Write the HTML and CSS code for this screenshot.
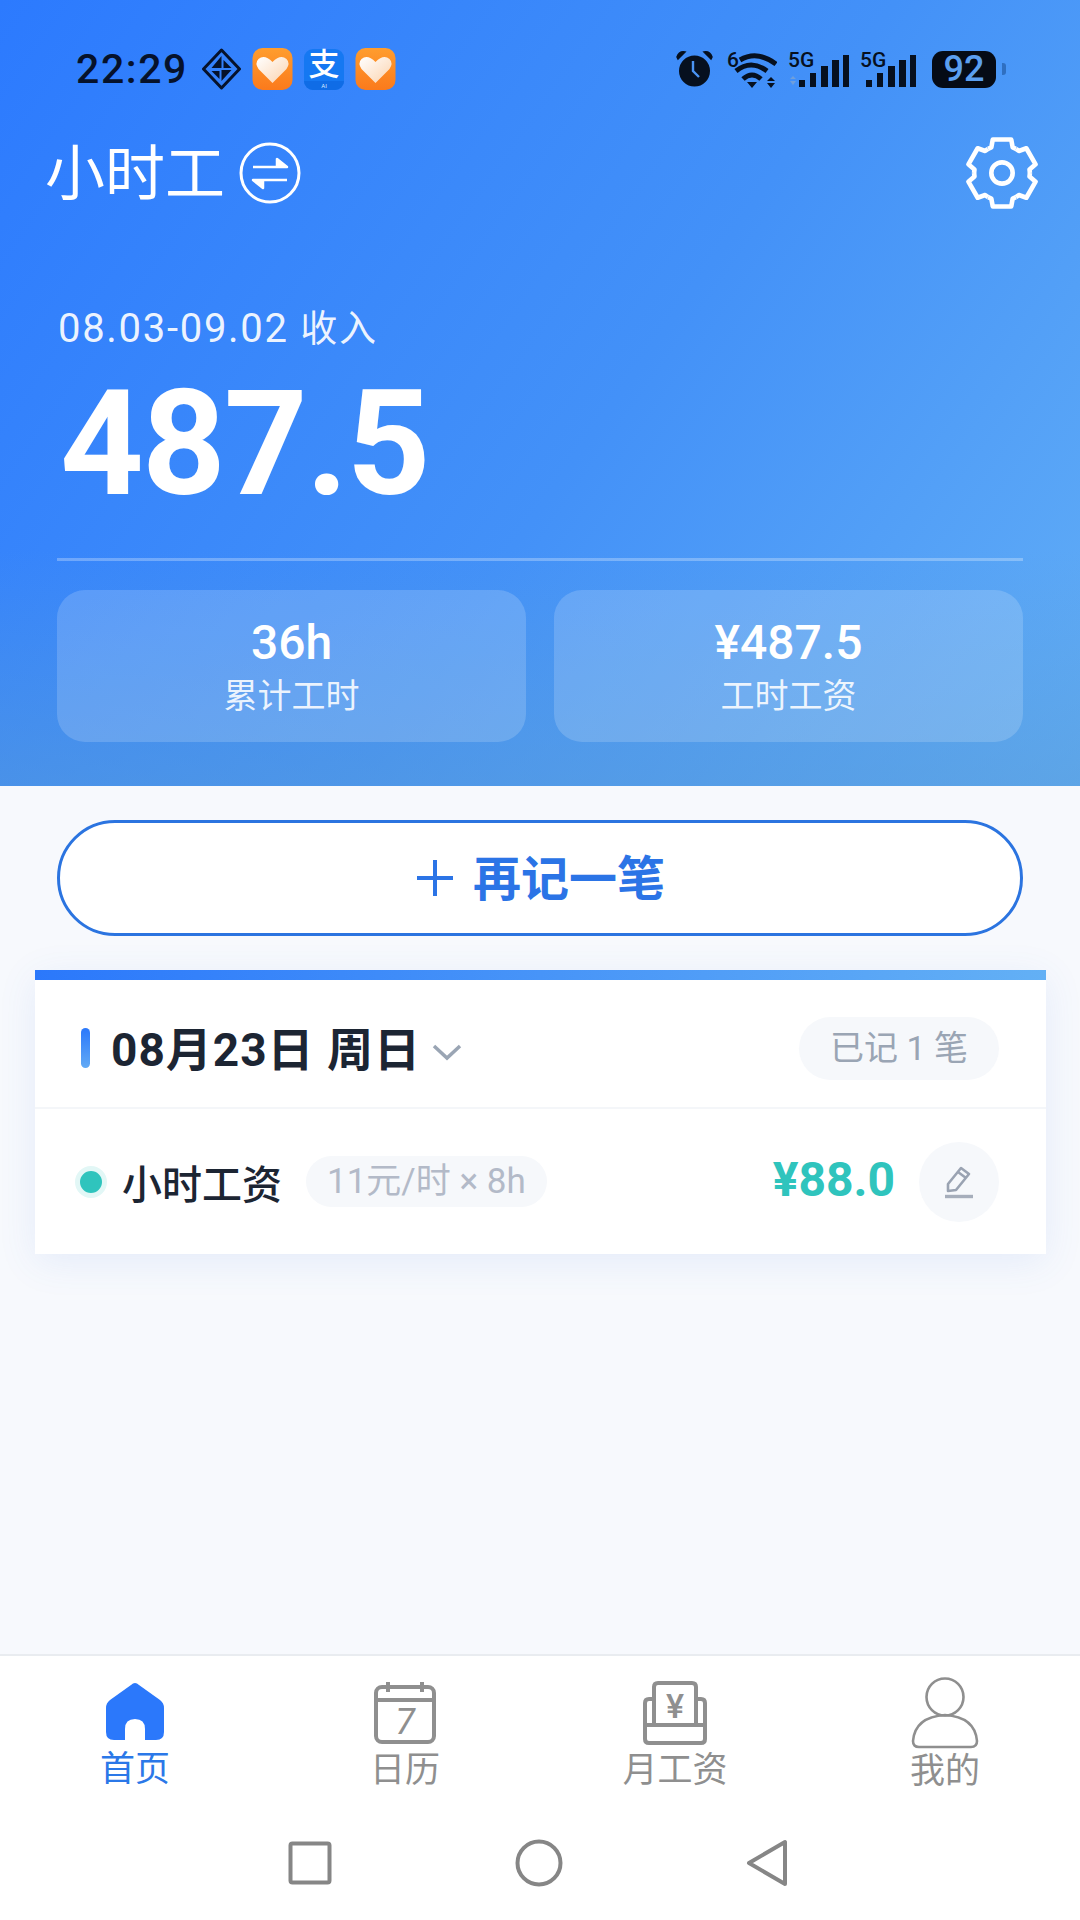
FILE: index.html
```html
<!DOCTYPE html>
<html lang="zh-CN">
<head>
    <meta charset="UTF-8">
    <meta name="viewport" content="width=device-width, initial-scale=1.0">
    <title>小时工</title>
    <link rel="stylesheet" href="styles.css">
</head>
<body>
    <div class="page">
        <header class="hero">
            <div class="status">
                <div class="status-left">
                    <span class="time">22:29</span>
                    <svg class="diamond" width="41" height="42" viewBox="0 0 40 42">
                        <path d="M20 2 L38 21 L20 40 L2 21 Z" fill="none" stroke="#06122b" stroke-width="3" stroke-linejoin="round"/>
                        <path d="M20 8 L20 20 L10 20 Z M20 22 L30 22 L20 33 Z M22 12 L30 20 L22 20 Z M10 23 L18 23 L18 31 Z" fill="#06122b"/>
                    </svg>
                    <svg class="app-icon" width="41" height="42" viewBox="0 0 40 42">
                        <use href="#heart-app"/>
                    </svg>
                    <div class="alipay"><span class="alipay-char">支</span><span class="alipay-ai">AI</span></div>
                    <svg class="app-icon" width="41" height="42" viewBox="0 0 40 42">
                        <use href="#heart-app"/>
                    </svg>
                </div>
                <div class="status-right">
                    <svg class="alarm" width="37" height="42" viewBox="0 0 37 42">
                        <circle cx="18.5" cy="23" r="15.5" fill="#06101f"/>
                        <path d="M1 9 Q3 3 9 4 L2 11 Z M36 9 Q34 3 28 4 L35 11 Z" fill="#06101f" stroke="#06101f" stroke-width="1.5"/>
                        <path d="M17 13 V23 L23 29" fill="none" stroke="#4a94f4" stroke-width="2.4"/>
                    </svg>
                    <svg class="wifi" width="50" height="42" viewBox="0 0 50 42">
                        <text class="sb-small" x="0" y="19">6</text>
                        <path d="M13 12 Q30 2 49 16" fill="none" stroke="#06101f" stroke-width="5"/>
                        <path d="M9 23 Q24 11 40 23" fill="none" stroke="#06101f" stroke-width="5"/>
                        <path d="M16 31 Q25 23 34 31" fill="none" stroke="#06101f" stroke-width="5"/>
                        <path d="M20 34 H30 L25 40 Z M44 29 L48 33 H40 Z M40 35 H48 L44 40 Z" fill="#06101f"/>
                    </svg>
                    <svg class="signal" width="61" height="42" viewBox="0 0 61 42">
                        <text class="sb-small" x="0" y="19">5G</text>
                        <path d="M2 31 L5 28 L8 31 Z M2 33 H8 L5 37 Z" fill="#6f9fdc"/>
                        <rect x="11" y="32" width="6" height="7" fill="#06101f"/>
                        <rect x="22" y="25" width="6" height="14" fill="#06101f"/>
                        <rect x="33" y="18" width="7" height="21" fill="#06101f"/>
                        <rect x="44" y="12" width="7" height="27" fill="#06101f"/>
                        <rect x="55" y="7" width="6" height="32" fill="#06101f"/>
                    </svg>
                    <svg class="signal signal-last" width="57" height="42" viewBox="0 0 57 42">
                        <text class="sb-small" x="0" y="19">5G</text>
                        <rect x="6" y="32" width="6" height="7" fill="#06101f"/>
                        <rect x="17" y="25" width="6" height="14" fill="#06101f"/>
                        <rect x="28" y="18" width="7" height="21" fill="#06101f"/>
                        <rect x="39" y="12" width="7" height="27" fill="#06101f"/>
                        <rect x="50" y="7" width="6" height="32" fill="#06101f"/>
                    </svg>
                    <div class="battery"><span class="battery-num">92</span></div>
                    <div class="battery-nub"></div>
                </div>
            </div>

            <div class="title-row">
                <div class="title-left">
                    <h1 class="title">小时工</h1>
                    <svg class="swap" width="62" height="62" viewBox="0 0 62 62">
                        <circle cx="31" cy="31" r="29" fill="none" stroke="#fff" stroke-width="3"/>
                        <path d="M14 25 H48 L38 17 V25" fill="#fff" stroke="#fff" stroke-width="2.5" stroke-linejoin="round"/>
                        <path d="M48 38 H14 L24 46 V38" fill="#fff" stroke="#fff" stroke-width="2.5" stroke-linejoin="round"/>
                    </svg>
                </div>
                <svg class="gear" width="74" height="74" viewBox="-52 -52 104 104">
                    <g fill="none" stroke="#fff" stroke-width="6.5" stroke-linejoin="round">
                        <path id="tooth" d="M-19.6 -34 L-15 -36 L-13 -47 H13 L15 -36 L19.6 -34"/>
                        <use href="#tooth" transform="rotate(60)"/>
                        <use href="#tooth" transform="rotate(120)"/>
                        <use href="#tooth" transform="rotate(180)"/>
                        <use href="#tooth" transform="rotate(240)"/>
                        <use href="#tooth" transform="rotate(300)"/>
                        <circle r="15"/>
                    </g>
                </svg>
            </div>

            <div class="income-label">08.03-09.02 <span class="income-unit">收入</span></div>
            <div class="income">487.5</div>
            <div class="hero-line"></div>

            <div class="stats">
                <div class="stat">
                    <div class="stat-value">36h</div>
                    <div class="stat-label">累计工时</div>
                </div>
                <div class="stat">
                    <div class="stat-value">¥487.5</div>
                    <div class="stat-label">工时工资</div>
                </div>
            </div>
        </header>

        <main class="content">
            <button class="add-btn"><span class="add-plus">
                <svg width="40" height="40" viewBox="0 0 40 40"><path d="M20 2 V38 M2 20 H38" stroke="#2b74e6" stroke-width="4" fill="none"/></svg>
            </span><span class="add-text">再记一笔</span></button>

            <section class="day-card">
                <div class="day-head">
                    <div class="day-left">
                        <span class="day-mark"></span>
                        <span class="day-date">08月23日 周日</span>
                        <svg class="chevron" width="30" height="18" viewBox="0 0 30 18"><path d="M2 3 L15 15 L28 3" fill="none" stroke="#9aa5b4" stroke-width="3.5"/></svg>
                    </div>
                    <div class="day-count">已记 1 笔</div>
                </div>
                <div class="record">
                    <div class="record-left">
                        <span class="record-dot"></span>
                        <span class="record-name">小时工资</span>
                        <span class="record-rate">11元/时 × 8h</span>
                    </div>
                    <div class="record-right">
                        <span class="record-money">¥88.0</span>
                        <span class="edit-btn">
                            <svg width="30" height="34" viewBox="0 0 30 34">
                                <path d="M4 19 L17 3 L25 9 L12 25 L4 26 Z M14 7 L22 13" fill="none" stroke="#9aa3b2" stroke-width="2.6" stroke-linejoin="round"/>
                                <path d="M1 31.5 H29" stroke="#a6aebb" stroke-width="3.4"/>
                            </svg>
                        </span>
                    </div>
                </div>
            </section>
        </main>

        <nav class="tabs">
            <a class="tab tab-on">
                <svg width="58" height="60" viewBox="0 0 58 60">
                    <path d="M29 1 Q31 1 33 3 L54 18 Q58 21 58 26 V50 Q58 58 50 58 H39 V47 Q39 37 29 37 Q19 37 19 47 V58 H8 Q0 58 0 50 V26 Q0 21 4 18 L25 3 Q27 1 29 1 Z" fill="#2b78fb"/>
                </svg>
                <span class="tab-name">首页</span>
            </a>
            <a class="tab">
                <svg width="64" height="64" viewBox="0 0 64 64">
                    <rect x="3" y="6" width="58" height="55" rx="6" fill="none" stroke="#8f8f8f" stroke-width="4"/>
                    <path d="M3 19 H61 M15 1 V11 M49 1 V11" stroke="#8f8f8f" stroke-width="4"/>
                    <text class="cal-num" x="32" y="53">7</text>
                </svg>
                <span class="tab-name">日历</span>
            </a>
            <a class="tab">
                <svg width="64" height="64" viewBox="0 0 64 64">
                    <path d="M11 44 V6 Q11 2 15 2 H49 Q53 2 53 6 V44" fill="none" stroke="#8f8f8f" stroke-width="4"/>
                    <path d="M11 18 H6 Q2 18 2 22 V58 Q2 62 6 62 H58 Q62 62 62 58 V22 Q62 18 58 18 H53 M2 44 H62" fill="none" stroke="#8f8f8f" stroke-width="4"/>
                    <text class="yuan" x="32" y="37">¥</text>
                </svg>
                <span class="tab-name">月工资</span>
            </a>
            <a class="tab tab-me">
                <svg width="68" height="72" viewBox="0 0 68 72">
                    <circle cx="34" cy="20" r="18.5" fill="none" stroke="#8f8f8f" stroke-width="2.6"/>
                    <path d="M8 70 Q2 70 2 64 Q4 40 34 38 Q64 40 66 64 Q66 70 60 70 Z" fill="none" stroke="#8f8f8f" stroke-width="2.6"/>
                </svg>
                <span class="tab-name">我的</span>
            </a>
        </nav>

        <div class="sys-nav">
            <svg width="44" height="44" viewBox="0 0 44 44"><rect x="2.5" y="2.5" width="39" height="39" rx="2" fill="none" stroke="#868686" stroke-width="4"/></svg>
            <svg width="48" height="48" viewBox="0 0 48 48"><circle cx="24" cy="24" r="21.5" fill="none" stroke="#868686" stroke-width="4"/></svg>
            <svg width="42" height="48" viewBox="0 0 42 48"><path d="M39 3 V45 L3 24 Z" fill="none" stroke="#868686" stroke-width="4" stroke-linejoin="round"/></svg>
        </div>
    </div>

    <svg class="defs" width="0" height="0">
        <defs>
            <linearGradient id="orange" x1="0" y1="0" x2="0" y2="1">
                <stop offset="0" stop-color="#ff9d2e"/>
                <stop offset="1" stop-color="#fb7a1c"/>
            </linearGradient>
            <linearGradient id="heartfill" x1="0" y1="0" x2="1" y2="1">
                <stop offset="0" stop-color="#ffffff"/>
                <stop offset="1" stop-color="#fbd3ae"/>
            </linearGradient>
            <g id="heart-app">
                <rect x="0" y="0" width="40" height="42" rx="10" fill="url(#orange)"/>
                <path d="M20 35 L6 21 Q2 15 6 11 Q12 6 20 14 Q28 6 34 11 Q38 15 34 21 Z" fill="url(#heartfill)"/>
            </g>
        </defs>
    </svg>
</body>
</html>
```

FILE: styles.css
```css
* { box-sizing: border-box; }
body {
    margin: 0;
    font-family: "Roboto", "Noto Sans CJK SC", sans-serif;
    background-color: #f7f9fd;
}
.page {
    width: 1080px;
    height: 1920px;
    display: flex;
    flex-direction: column;
    overflow: hidden;
}
.defs { display: block; }

/* top blue part */
.hero {
    height: 786px;
    padding: 48px 57px 0;
    color: white;
    background:
        linear-gradient(180deg, rgba(88, 155, 215, 0) 70%, rgba(88, 155, 215, 0.5) 100%),
        linear-gradient(125deg, #2c7afe 0%, #4391f8 55%, #62aef6 100%);
}
.status {
    display: flex;
    justify-content: space-between;
    align-items: center;
    height: 42px;
    margin-left: 19px;
    margin-right: 17px;
}
.status-left, .status-right {
    display: flex;
    align-items: center;
}
.time {
    font-size: 41px;
    font-weight: 500;
    letter-spacing: 1.6px;
    color: #06122b;
    margin-right: 13px;
}
.diamond { margin-right: 10px; }
.app-icon { margin-right: 11px; }
.alipay {
    width: 40px;
    height: 41px;
    margin-right: 11px;
    border-radius: 9px;
    background: #1578f2;
    display: flex;
    flex-direction: column;
    align-items: center;
}
.alipay-char {
    font-size: 31px;
    line-height: 32px;
    font-weight: 500;
    color: white;
}
.alipay-ai {
    width: 100%;
    font-size: 6px;
    line-height: 9px;
    text-align: center;
    color: #d7e8ff;
    background: #0f6ce6;
    border-radius: 0 0 9px 9px;
}
.alarm { margin-right: 14px; }
.wifi { margin-right: 11px; }
.signal { margin-right: 11px; }
.signal-last { margin-right: 15px; }
.sb-small {
    font-family: "Roboto", sans-serif;
    font-size: 21px;
    font-weight: 500;
    fill: #06101f;
}
.battery {
    width: 64px;
    height: 37px;
    border-radius: 11px;
    background: #050b16;
    display: flex;
    align-items: center;
    justify-content: center;
}
.battery-num {
    font-size: 36px;
    font-weight: 500;
    color: #5b9ff0;
}
.battery-nub {
    width: 4px;
    height: 12px;
    margin-left: 6px;
    border-radius: 0 3px 3px 0;
    background: #2f6fc0;
}
.title-row {
    display: flex;
    justify-content: space-between;
    align-items: center;
    height: 74px;
    margin: 46px -16px 0 -12px;
}
.title-left {
    display: flex;
    align-items: center;
}
.title {
    margin: 3px 14px 0 0;
    font-size: 60px;
    font-weight: 400;
    line-height: 74px;
}
.income-label {
    margin: 94px 0 0 1px;
    font-size: 40px;
    letter-spacing: 1.7px;
    line-height: 50px;
    color: rgba(255, 255, 255, 0.92);
}
.income-unit {
    font-size: 37px;
}
.income {
    margin: 15px 0 0 3px;
    font-size: 146px;
    font-weight: 700;
    line-height: 150px;
    letter-spacing: -1.75px;
}
.hero-line {
    height: 3px;
    margin-top: 38px;
    background: rgba(255, 255, 255, 0.28);
}
.stats {
    display: flex;
    gap: 28px;
    margin-top: 29px;
}
.stat {
    flex: 1;
    height: 152px;
    border-radius: 28px;
    background: rgba(255, 255, 255, 0.17);
    text-align: center;
    padding-top: 25px;
}
.stat-value {
    font-size: 48px;
    font-weight: 500;
    line-height: 56px;
}
.stat-label {
    font-size: 34px;
    line-height: 51px;
    color: rgba(255, 255, 255, 0.88);
}

/* list */
.content {
    flex: 1;
    padding-top: 34px;
}
.add-btn {
    display: flex;
    align-items: center;
    justify-content: center;
    width: 966px;
    height: 116px;
    margin: 0 57px;
    border: 3px solid #2b74e0;
    border-radius: 58px;
    background: white;
    color: #2b74e6;
    font-family: inherit;
    font-size: 48px;
    font-weight: 700;
    padding: 0;
}
.add-plus {
    display: flex;
    margin-right: 18px;
}
.add-text { margin-top: -6px; }
.day-card {
    width: 1011px;
    margin: 34px 0 0 35px;
    background: white;
    border-top: 10px solid #2b7afa;
    border-image: linear-gradient(90deg, #2b78fb, #63b0f5) 1;
    box-shadow: 0 8px 36px rgba(70, 120, 220, 0.1);
}
.day-head {
    display: flex;
    justify-content: space-between;
    align-items: center;
    height: 129px;
    padding: 9px 47px 0 46px;
    border-bottom: 2px solid #f4f6f9;
}
.day-left {
    display: flex;
    align-items: center;
}
.day-mark {
    width: 9px;
    height: 40px;
    margin-right: 21px;
    border-radius: 5px;
    background: linear-gradient(180deg, #2b78fb, #62aaf5);
}
.day-date {
    font-size: 46px;
    letter-spacing: 1px;
    font-weight: 700;
    margin-top: -4px;
    color: #1c2533;
}
.chevron {
    margin: 8px 0 0 11px;
}
.day-count {
    width: 200px;
    height: 63px;
    border-radius: 32px;
    background: #f6f8fb;
    color: #9aa5b4;
    font-size: 34px;
    line-height: 63px;
    text-align: center;
}
.record {
    display: flex;
    justify-content: space-between;
    align-items: center;
    height: 145px;
    padding: 0 47px 0 40px;
}
.record-left, .record-right {
    display: flex;
    align-items: center;
}
.record-dot {
    width: 32px;
    height: 32px;
    margin-right: 15px;
    border-radius: 50%;
    background: #2fc4bd;
    border: 5px solid #e2f7f6;
}
.record-name {
    font-size: 40px;
    font-weight: 500;
    color: #1c2533;
    margin-right: 24px;
}
.record-rate {
    height: 51px;
    padding: 0 21px;
    border-radius: 26px;
    background: #f6f8fb;
    color: #b3bac8;
    font-size: 35px;
    line-height: 51px;
}
.record-money {
    font-size: 48px;
    font-weight: 700;
    line-height: 56px;
    margin-top: -4px;
    color: #2fc4bd;
    margin-right: 24px;
}
.edit-btn {
    display: flex;
    align-items: center;
    justify-content: center;
    width: 80px;
    height: 80px;
    border-radius: 50%;
    background: #f6f8fb;
}

/* bottom */
.tabs {
    display: flex;
    height: 170px;
    background: white;
    border-top: 2px solid #e9ecf0;
}
.tab {
    width: 270px;
    display: flex;
    flex-direction: column;
    align-items: center;
    padding-top: 25px;
}
.tab-on { padding-top: 26px; }
.tab-me { padding-top: 21px; }
.tab-on .tab-name {
    color: #2b78e8;
    margin-top: 5px;
}
.tab-name {
    font-size: 35px;
    line-height: 46px;
    margin-top: 3px;
    color: #8f8f8f;
}
.tab-me .tab-name { margin-top: 0; }
.cal-num {
    font-family: "Roboto", sans-serif;
    font-size: 36px;
    font-style: italic;
    fill: #8f8f8f;
    text-anchor: middle;
}
.yuan {
    font-family: "Roboto", sans-serif;
    font-size: 34px;
    font-weight: 500;
    fill: #8f8f8f;
    text-anchor: middle;
}
.sys-nav {
    display: flex;
    align-items: center;
    justify-content: space-between;
    height: 96px;
    padding: 0 292px 18px 288px;
    background: white;
}
```
